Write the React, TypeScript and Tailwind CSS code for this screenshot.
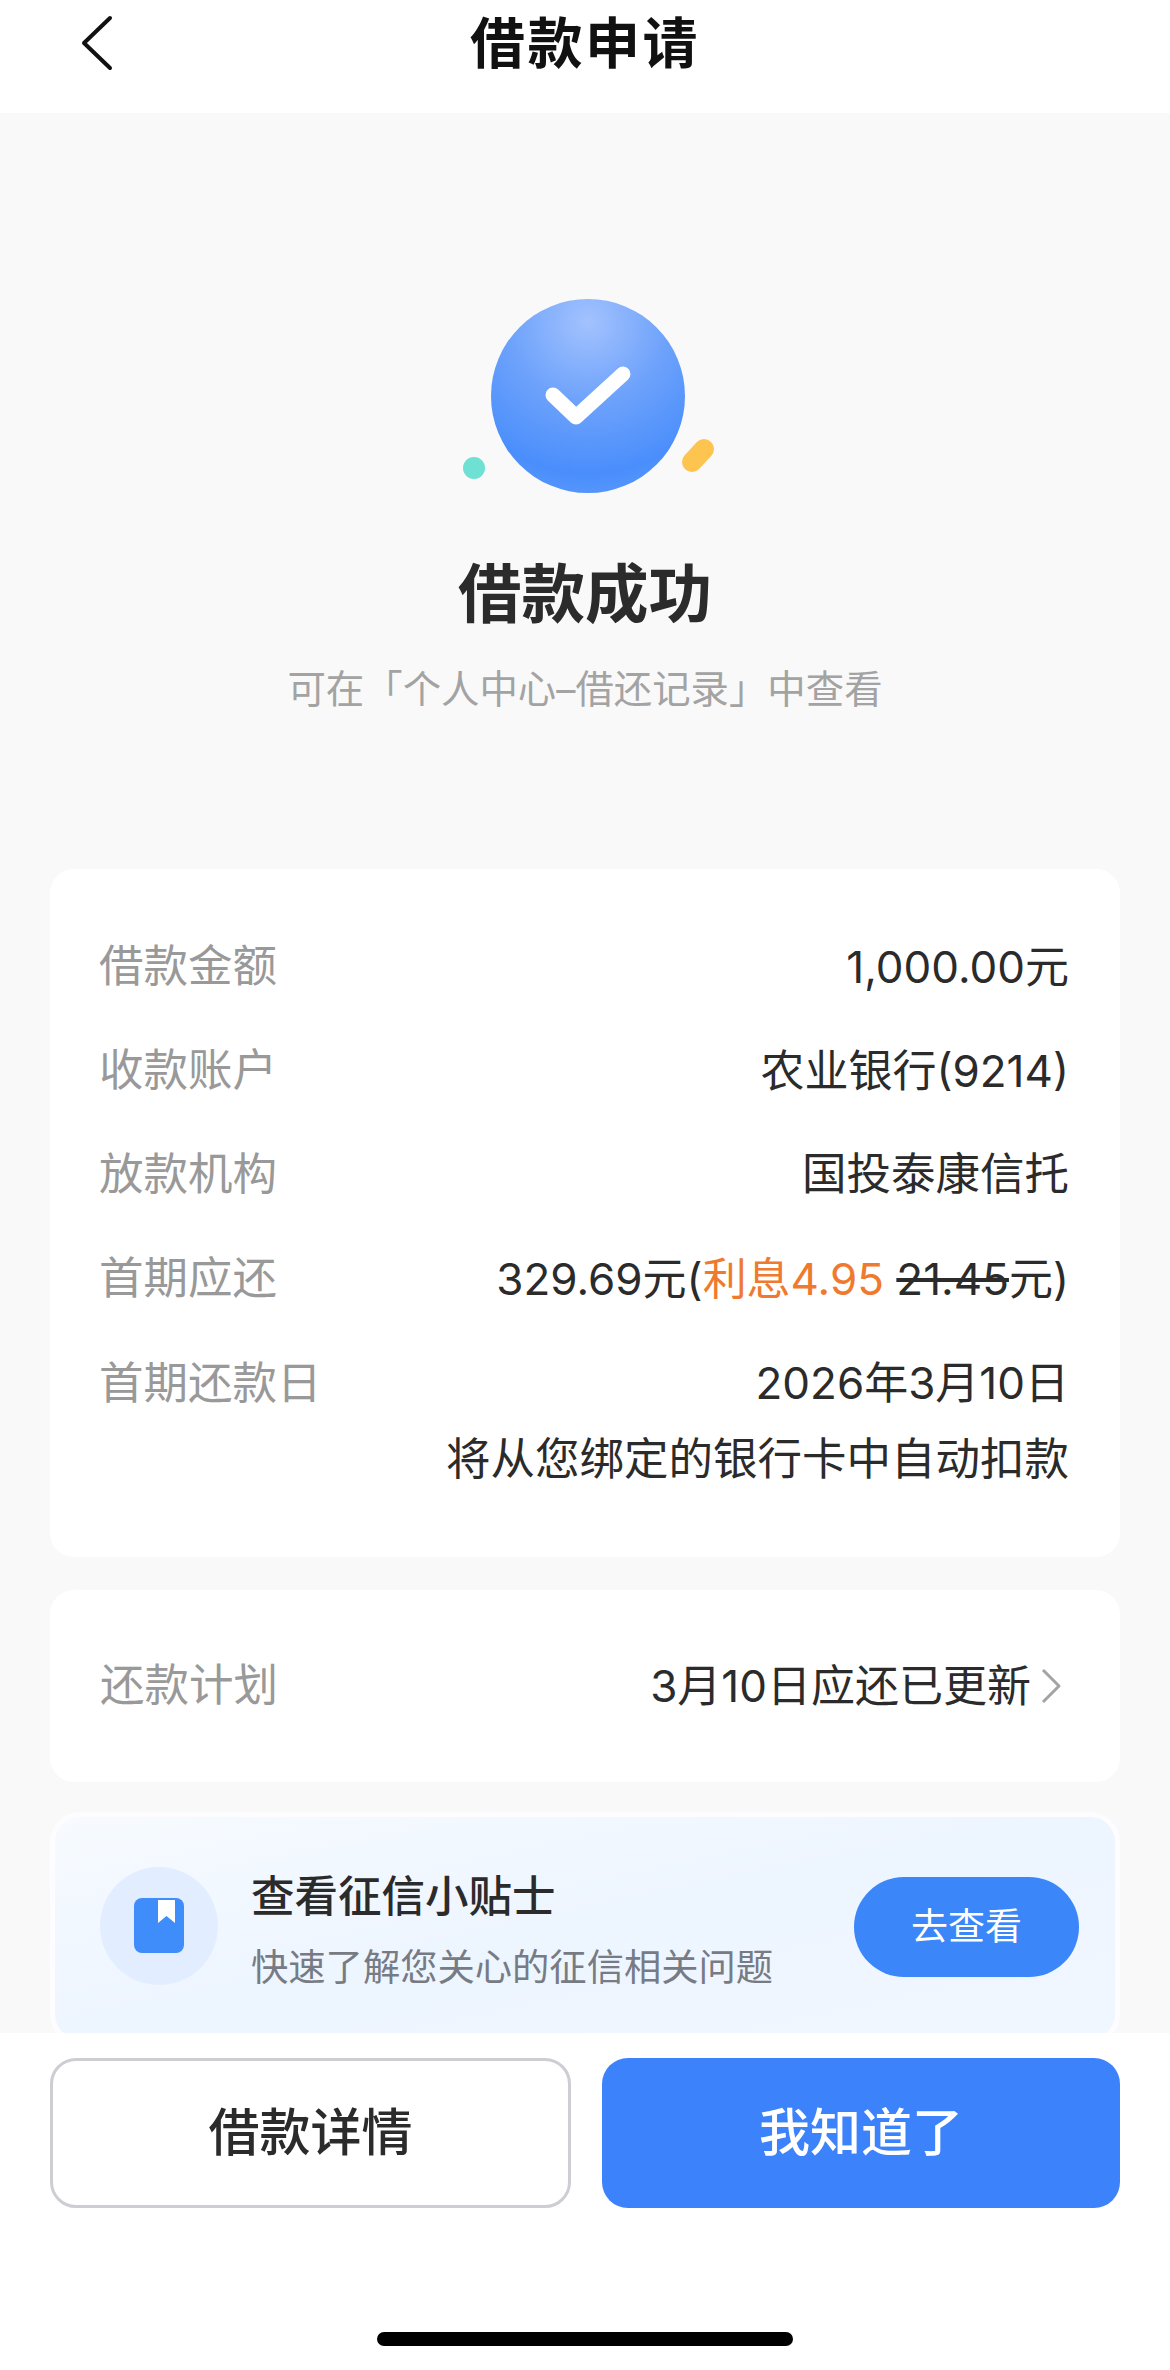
const rows = [
  { label: '借款金额', value: '1,000.00元', size: 'text-[44px]' },
  { label: '收款账户', value: '农业银行(9214)', size: 'text-[44px]' },
  { label: '放款机构', value: '国投泰康信托', size: 'text-[44.5px]' },
]

function SuccessIcon() {
  return (
    <svg width="260" height="210" viewBox="0 0 260 210" fill="none">
      <defs>
        <radialGradient id="ball" cx="0.5" cy="0.12" r="0.95">
          <stop offset="0" stopColor="#a3c2fe" />
          <stop offset="0.42" stopColor="#6fa3fb" />
          <stop offset="0.82" stopColor="#4a8efc" />
          <stop offset="1" stopColor="#5a9afb" />
        </radialGradient>
      </defs>
      <circle cx="133" cy="106" r="97" fill="url(#ball)" />
      <path d="M98 105 L121 127 L168 84" stroke="#fff" strokeWidth="15" strokeLinecap="round" strokeLinejoin="round" />
      <circle cx="19" cy="178" r="11" fill="#6fe0d4" />
      <path d="M237 172 L249 159" stroke="#fdc44f" strokeWidth="20" strokeLinecap="round" />
    </svg>
  )
}

export default function App() {
  return (
    <div
      lang="zh-CN"
      className="w-[1170px] h-[2370px] flex flex-col overflow-hidden bg-white text-[#2b2b2b] [font-family:Inter,'Noto_Sans_CJK_SC',sans-serif]"
    >
      {/* Header */}
      <div className="relative h-[113px] shrink-0 flex items-start justify-center bg-white">
        <svg className="absolute left-[80px] top-[15px]" width="34" height="56" viewBox="0 0 34 56" fill="none">
          <path d="M30 3 L4 28 L30 53" stroke="#111" strokeWidth="4" strokeLinecap="round" strokeLinejoin="round" />
        </svg>
        <h1 className="text-[55px] leading-[86px] font-bold tracking-[2.5px] text-[#111]">借款申请</h1>
      </div>

      {/* Content */}
      <div className="flex-1 min-h-0 overflow-hidden bg-[#f9f9f9] px-[50px]">
        <div className="flex flex-col items-center pt-[177px]">
          <SuccessIcon />
          <h2 className="mt-[54px] text-[63.5px] leading-[80px] font-bold text-[#2b2b2b]">借款成功</h2>
          <p className="mt-[25px] text-[38.4px] leading-[60px] text-[#a3a3a3]">可在「个人中心–借还记录」中查看</p>
        </div>

        {/* Loan info */}
        <div className="mt-[150px] bg-white rounded-[24px] pl-[49px] pr-[51px] pt-[45.5px] pb-[74px] text-[44px]">
          {rows.map((row) => (
            <div key={row.label} className="h-[104px] flex items-center justify-between">
              <span className="text-[#999] text-[44.5px]">{row.label}</span>
              <span className={row.size}>{row.value}</span>
            </div>
          ))}
          <div className="h-[104px] flex items-center justify-between">
            <span className="text-[#999] text-[44.5px]">首期应还</span>
            <span>
              329.69元(<span className="text-[#ef7a2f]">利息4.95</span>{' '}
              <span className="line-through">21.45</span>元)
            </span>
          </div>
          <div className="flex items-start justify-between">
            <span className="text-[#999] text-[44.5px] leading-[104px]">首期还款日</span>
            <div className="text-right">
              <div className="leading-[104px]">2026年3月10日</div>
              <div className="text-[44.5px] leading-[48px]">将从您绑定的银行卡中自动扣款</div>
            </div>
          </div>
        </div>

        {/* Repayment plan */}
        <div className="mt-[33px] h-[192px] bg-white rounded-[24px] pl-[50px] pr-[58px] flex items-center justify-between text-[44px]">
          <span className="text-[#999] text-[44.5px]">还款计划</span>
          <div className="flex items-center">
            <span>3月10日应还已更新</span>
            <svg className="ml-[9px]" width="22" height="36" viewBox="0 0 22 36" fill="none">
              <path d="M3 2 L19 18 L3 34" stroke="#a3a3a3" strokeWidth="3" strokeLinejoin="round" />
            </svg>
          </div>
        </div>

        {/* Credit tips */}
        <div className="mt-[30px] h-[232px] rounded-[30px] border-[5px] border-[#fdfdff] bg-gradient-to-br from-[#f7fbff] via-[#edf5ff] to-[#f1f7ff] pl-[45px] pr-[36px] pt-[45px] flex items-start">
          <div className="w-[118px] h-[118px] rounded-full bg-[#e2eeff] flex items-center justify-center shrink-0 mt-[5px]">
            <svg width="50" height="55" viewBox="0 0 50 55">
              <rect width="50" height="55" rx="8" fill="#3f8cfb" />
              <path d="M24 2 H41 V25 L32.5 18 L24 25 Z" fill="#fff" />
            </svg>
          </div>
          <div className="ml-[33px] flex-1">
            <div className="text-[43.5px] leading-[60px] font-medium text-[#2b2b2b] mt-[4px]">查看征信小贴士</div>
            <div className="text-[37.3px] leading-[50px] mt-[17px] text-[#777b84]">快速了解您关心的征信相关问题</div>
          </div>
          <button className="w-[225px] h-[100px] mt-[15px] rounded-full bg-[#3b86f8] text-white text-[37px]">去查看</button>
        </div>
      </div>

      {/* Bottom bar */}
      <div className="h-[337px] shrink-0 bg-white px-[50px] pt-[25px] flex flex-col items-center">
        <div className="w-full flex gap-[31px]">
          <button className="w-[521px] h-[150px] rounded-[26px] border-[3px] border-[#ccced4] bg-white text-[51px] font-medium text-[#2b2b2b]">
            借款详情
          </button>
          <button className="w-[518px] h-[150px] rounded-[26px] bg-[#3c82fb] text-[51px] font-medium text-white">
            我知道了
          </button>
        </div>
        <div className="mt-[124px] w-[416px] h-[14px] rounded-full bg-black" />
      </div>
    </div>
  )
}
